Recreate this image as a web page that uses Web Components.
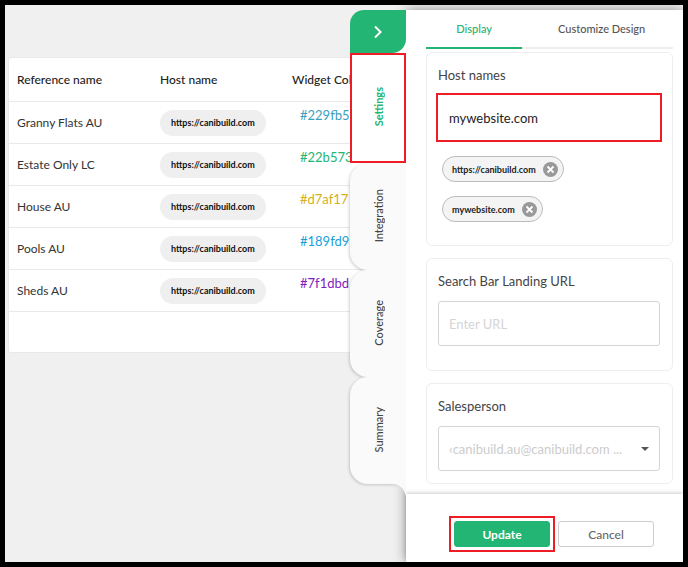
<!DOCTYPE html>
<html lang="en">
<head>
<meta charset="utf-8">
<meta name="viewport" content="width=device-width, initial-scale=1">
<title>Widget settings</title>
<style>
    body {
        margin: 0;
        font-family: Lato, "Liberation Sans", sans-serif;
        color: #222;
        --green: #22b573;
        --mark: #ee1c25;
        --line: #e9e9e9;
    }
</style>
</head>
<body>
<app-frame>
    <widget-table></widget-table>
    <settings-drawer slot="drawer">
        <side-tab slot="rail" label="Settings" active></side-tab>
        <side-tab slot="rail" label="Integration"></side-tab>
        <side-tab slot="rail" label="Coverage"></side-tab>
        <side-tab slot="rail" label="Summary" last></side-tab>
        <field-card heading="Host names" value="mywebsite.com" marked>
            <host-chip name="https://canibuild.com"></host-chip>
            <host-chip name="mywebsite.com"></host-chip>
        </field-card>
        <field-card heading="Search Bar Landing URL" placeholder="Enter URL"></field-card>
        <field-card heading="Salesperson" option="‹canibuild.au@canibuild.com ..."></field-card>
        <form-actions slot="footer"></form-actions>
    </settings-drawer>
</app-frame>

<script>
(function() {
    class AppFrame extends HTMLElement {
        constructor() {
            super();
            this.attachShadow({ mode: 'open' });
            this.shadowRoot.innerHTML = `
                <style>
                    :host {
                        display: block;
                        box-sizing: border-box;
                        height: 100vh;
                        border: 5px solid #000;
                        background: #f0f0f0;
                        position: relative;
                        overflow: hidden;
                    }
                    main {
                        padding: 52px 3px 0;
                    }
                    /* the drawer lies over the page */
                    aside {
                        position: absolute;
                        top: 5px;
                        right: 0;
                        bottom: 0;
                        display: flex;
                    }
                </style>
                <main><slot></slot></main>
                <aside><slot name="drawer"></slot></aside>
            `;
        }
    }
    customElements.define('app-frame', AppFrame);

    const widgets = [
        { name: 'Granny Flats AU', host: 'https://canibuild.com', color: '#229fb5', text: '#3d9fc0' },
        { name: 'Estate Only LC', host: 'https://canibuild.com', color: '#22b573' },
        { name: 'House AU', host: 'https://canibuild.com', color: '#d7af17' },
        { name: 'Pools AU', host: 'https://canibuild.com', color: '#189fd9' },
        { name: 'Sheds AU', host: 'https://canibuild.com', color: '#7f1dbd' }
    ];

    class WidgetTable extends HTMLElement {
        constructor() {
            super();
            this.attachShadow({ mode: 'open' });
        }

        connectedCallback() {
            const rows = widgets.map(w => `
                <tr>
                    <td>${w.name}</td>
                    <td><span class="chip">${w.host}</span></td>
                    <td class="color" style="color: ${w.text || w.color}">${w.color}</td>
                </tr>
            `).join('');

            this.shadowRoot.innerHTML = `
                <style>
                    :host {
                        display: block;
                        background: #fff;
                        border: 1px solid var(--line);
                        border-radius: 3px;
                        padding-bottom: 40px;
                    }
                    table {
                        width: 100%;
                        table-layout: fixed;
                        border-collapse: separate;
                        border-spacing: 0;
                        font-size: 12px;
                        line-height: 16px;
                    }
                    .name { width: 143px; }
                    .host { width: 132px; }
                    th, td {
                        box-sizing: border-box;
                        padding: 0 8px;
                        text-align: left;
                        border-bottom: 1px solid var(--line);
                        white-space: nowrap;
                    }
                    th {
                        height: 44px;
                        font-weight: 500;
                    }
                    td {
                        height: 42px;
                        color: #333;
                    }
                    .chip {
                        display: inline-block;
                        padding: 0 11px;
                        border-radius: 13px;
                        background: #efefef;
                        color: #111;
                        font-size: 9px;
                        font-weight: 700;
                        line-height: 26px;
                        vertical-align: middle;
                    }
                    .color {
                        padding: 5px 16px 0;
                        vertical-align: top;
                        font-size: 13px;
                    }
                </style>
                <table>
                    <thead>
                        <tr>
                            <th class="name">Reference name</th>
                            <th class="host">Host name</th>
                            <th>Widget Col</th>
                        </tr>
                    </thead>
                    <tbody>${rows}</tbody>
                </table>
            `;
        }
    }
    customElements.define('widget-table', WidgetTable);

    class SettingsDrawer extends HTMLElement {
        constructor() {
            super();
            this.attachShadow({ mode: 'open' });
            this.shadowRoot.innerHTML = `
                <style>
                    :host {
                        display: flex;
                    }
                    button {
                        font: inherit;
                        border: 0;
                        padding: 0;
                        background: none;
                        cursor: pointer;
                    }
                    .rail {
                        width: 56px;
                        display: flex;
                        flex-direction: column;
                        position: relative;
                        z-index: 1;
                    }
                    .close {
                        height: 43px;
                        background: var(--green);
                        border-radius: 14px 0 14px 0;
                        display: flex;
                        align-items: center;
                        justify-content: center;
                    }
                    .top {
                        background: #fff;
                        border-top-left-radius: 14px;
                        display: grid;
                    }
                    .panel {
                        width: 277px;
                        display: flex;
                        flex-direction: column;
                        background: #fff;
                        box-shadow: 0 0 12px rgba(0, 0, 0, 0.4);
                    }
                    nav {
                        display: flex;
                        height: 39px;
                        margin: 0 10px 3px 20px;
                        font-size: 11px;
                        font-weight: 500;
                    }
                    nav button {
                        flex: 1;
                        padding-left: 8px;
                        color: #555;
                        border-bottom: 2px solid #eee;
                    }
                    nav button.active {
                        flex: 0 0 39%;
                        padding-left: 0;
                        color: var(--green);
                        border-color: var(--green);
                    }
                    .cards {
                        flex: 1;
                        min-height: 0;
                        overflow: hidden;
                        display: flex;
                        flex-direction: column;
                        gap: 12px;
                        padding: 0 10px 0 20px;
                    }
                </style>
                <div class="rail">
                    <div class="top">
                        <button class="close" aria-label="Close">
                            <svg width="10" height="14" viewBox="0 0 10 14" fill="none" stroke="#fff" stroke-width="2"><path d="M2 1.5L7.5 7 2 12.5"/></svg>
                        </button>
                    </div>
                    <slot name="rail"></slot>
                </div>
                <div class="panel">
                    <nav>
                        <button class="active">Display</button>
                        <button>Customize Design</button>
                    </nav>
                    <div class="cards"><slot></slot></div>
                    <slot name="footer"></slot>
                </div>
            `;
        }
    }
    customElements.define('settings-drawer', SettingsDrawer);

    class SideTab extends HTMLElement {
        constructor() {
            super();
            this.attachShadow({ mode: 'open' });
        }

        connectedCallback() {
            const label = this.getAttribute('label') || '';

            this.shadowRoot.innerHTML = `
                <style>
                    :host {
                        display: grid;
                        height: 107px;
                        position: relative;
                    }
                    :host([active]) {
                        height: 110px;
                    }
                    button {
                        border: 0;
                        padding: 0;
                        border-radius: 18px 0 0 18px;
                        background: #fafafa;
                        box-shadow: -1px 1px 3px rgba(0, 0, 0, 0.18);
                        clip-path: inset(0 0 -5px -5px);
                        color: #444;
                        font: inherit;
                        font-size: 11px;
                        font-weight: 500;
                        cursor: pointer;
                    }
                    :host([active]) button {
                        background: #fff;
                        color: var(--green);
                        border-radius: 0;
                        border: 2px solid var(--mark);
                        font-weight: 700;
                        box-shadow: none;
                    }
                    span {
                        writing-mode: vertical-rl;
                        transform: rotate(180deg);
                    }
                    /* inner curve that joins the last tab to the panel */
                    svg {
                        display: none;
                        position: absolute;
                        top: 100%;
                        right: 0;
                    }
                    :host([last]) svg {
                        display: block;
                    }
                </style>
                <button><span>${label}</span></button>
                <svg width="14" height="12" viewBox="0 0 14 12"><path d="M0 0h14v12C12 4 7 0 0 0z" fill="#fafafa"/></svg>
            `;
        }
    }
    customElements.define('side-tab', SideTab);

    class FieldCard extends HTMLElement {
        constructor() {
            super();
            this.attachShadow({ mode: 'open' });
        }

        connectedCallback() {
            const heading = this.getAttribute('heading') || '';
            const value = this.getAttribute('value') || '';
            const placeholder = this.getAttribute('placeholder') || '';
            const option = this.getAttribute('option');

            const control = option
                ? `<select id="field"><option>${option}</option></select>
                   <svg width="8" height="4" viewBox="0 0 8 4"><path d="M0 0h8L4 4z" fill="#555"/></svg>`
                : `<input id="field" type="text" value="${value}" placeholder="${placeholder}">`;

            this.shadowRoot.innerHTML = `
                <style>
                    :host {
                        display: block;
                        flex: none;
                        border: 1px solid #eee;
                        border-radius: 6px;
                        padding: 12px 12px 24px 11px;
                    }
                    :host([marked]) {
                        padding-bottom: 23px;
                    }
                    :host([option]) {
                        padding-bottom: 12px;
                    }
                    label {
                        display: block;
                        font-size: 13px;
                        line-height: 20px;
                        color: #444;
                        margin-bottom: 10px;
                    }
                    .control {
                        display: grid;
                        position: relative;
                    }
                    input, select {
                        box-sizing: border-box;
                        width: 100%;
                        height: 45px;
                        padding: 0 10px;
                        border: 1px solid #d5d5d5;
                        border-radius: 3px;
                        background: #fff;
                        font: inherit;
                        font-size: 13px;
                        color: #222;
                        outline: none;
                    }
                    input::placeholder {
                        color: #d5d5d5;
                        opacity: 1;
                    }
                    select {
                        appearance: none;
                        color: #ccc;
                        padding-right: 24px;
                    }
                    svg {
                        position: absolute;
                        right: 11px;
                        top: 21px;
                        pointer-events: none;
                    }
                    :host([marked]) input {
                        border-color: #fff;
                        border-radius: 0;
                        outline: 2px solid var(--mark);
                    }
                    slot {
                        display: flex;
                        flex-direction: column;
                        align-items: flex-start;
                        gap: 14px;
                        padding-left: 4px;
                    }
                    :host([marked]) slot {
                        margin-top: 16px;
                    }
                </style>
                <label for="field">${heading}</label>
                <div class="control">${control}</div>
                <slot></slot>
            `;
        }
    }
    customElements.define('field-card', FieldCard);

    class HostChip extends HTMLElement {
        constructor() {
            super();
            this.attachShadow({ mode: 'open' });
        }

        connectedCallback() {
            const name = this.getAttribute('name') || '';

            this.shadowRoot.innerHTML = `
                <style>
                    :host {
                        display: flex;
                        align-items: center;
                        gap: 7px;
                        box-sizing: border-box;
                        height: 26px;
                        padding: 0 5px 0 9px;
                        border: 1px solid #bbb;
                        border-radius: 13px;
                        background: #f4f4f4;
                        font-size: 9px;
                        font-weight: 700;
                        color: #222;
                    }
                    button {
                        display: flex;
                        border: 0;
                        padding: 0;
                        background: none;
                        cursor: pointer;
                    }
                </style>
                <span>${name}</span>
                <button aria-label="Remove">
                    <svg width="15" height="15" viewBox="0 0 15 15"><circle cx="7.5" cy="7.5" r="7.5" fill="#999"/><path d="M4.5 4.5l6 6m0-6l-6 6" stroke="#fff" stroke-width="1.8"/></svg>
                </button>
            `;
        }
    }
    customElements.define('host-chip', HostChip);

    class FormActions extends HTMLElement {
        constructor() {
            super();
            this.attachShadow({ mode: 'open' });
            this.shadowRoot.innerHTML = `
                <style>
                    :host {
                        display: flex;
                        justify-content: flex-end;
                        gap: 8px;
                        padding: 27px 29px 15px;
                        background: #fff;
                        box-shadow: 0 -1px 4px rgba(0, 0, 0, 0.2);
                    }
                    button {
                        box-sizing: border-box;
                        width: 96px;
                        height: 26px;
                        padding: 0;
                        border: 1px solid #ccc;
                        border-radius: 3px;
                        background: #fff;
                        color: #666;
                        font: inherit;
                        font-size: 12px;
                        font-weight: 500;
                        cursor: pointer;
                    }
                    .primary {
                        border-color: var(--green);
                        background: var(--green);
                        color: #fff;
                        font-weight: 700;
                    }
                    .mark {
                        display: flex;
                        outline: 2px solid var(--mark);
                        outline-offset: 3px;
                    }
                </style>
                <div class="mark"><button class="primary">Update</button></div>
                <button>Cancel</button>
            `;
        }
    }
    customElements.define('form-actions', FormActions);
})();
</script>
</body>
</html>
